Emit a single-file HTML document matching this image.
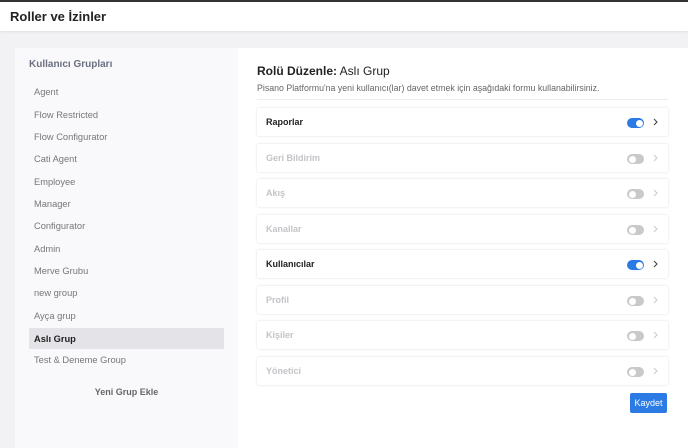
<!DOCTYPE html>
<html><head><meta charset="utf-8"><style>
*{margin:0;padding:0;box-sizing:border-box}
body{width:688px;height:439px;overflow:hidden;background:#f2f2f4;font-family:"Liberation Sans",sans-serif;position:relative}
.top{position:absolute;left:0;top:0;width:688px;height:31px;background:#fff;border-top:2px solid #333;box-shadow:0 1px 3px rgba(0,0,0,.08)}
.top h1{position:absolute;left:10px;top:7px;font-size:13px;font-weight:bold;color:#222}
.left{position:absolute;left:15px;top:48px;width:223px;height:400px;background:#f9f9fb}
.left .t{position:absolute;left:14px;top:11px;font-size:10px;font-weight:bold;color:#6c6f80}
.it{position:absolute;left:14px;width:195px;height:21px;line-height:22px;padding-left:5px;font-size:9.3px;color:#777}
.it.a{background:#e3e3e8;color:#222;font-weight:bold}
.add{position:absolute;left:0;width:223px;text-align:center;top:339px;font-size:9px;font-weight:bold;color:#666}
.right{position:absolute;left:238px;top:48px;width:450px;height:400px;background:#fff}
.h{position:absolute;left:19px;top:16px;font-size:12px;color:#222}
.d{position:absolute;left:19px;top:35px;font-size:8.8px;color:#666}
.sep{position:absolute;left:19px;top:51px;width:411px;height:1px;background:#eee}
.row{position:absolute;left:19px;width:411px;height:28px;background:#fff;box-shadow:0 0 2px rgba(0,0,0,.15);border-radius:2px}
.row span{position:absolute;left:9px;top:9px;font-size:9px;font-weight:bold;color:#222}
.row.off span{color:#c4c4c8}
.tg{position:absolute;left:370px;top:10px;width:17px;height:10px;border-radius:5px;background:#2c7be5}
.tg:after{content:"";position:absolute;right:1.5px;top:1.5px;width:7px;height:7px;border-radius:50%;background:#fff}
.off .tg{background:#c9c9cc}
.off .tg:after{left:1.5px;right:auto}
.ch{position:absolute;left:396px;top:10px}
.btn{position:absolute;left:392px;top:345px;width:37px;height:20px;background:#2c7be5;color:#fff;font-size:9px;line-height:20px;text-align:center;border-radius:2px}
</style></head><body>
<div class="top"><h1>Roller ve İzinler</h1></div>
<div class="left">
<div class="t">Kullanıcı Grupları</div>
<div class="it" style="top:33px">Agent</div>
<div class="it" style="top:56px">Flow Restricted</div>
<div class="it" style="top:78px">Flow Configurator</div>
<div class="it" style="top:100px">Cati Agent</div>
<div class="it" style="top:123px">Employee</div>
<div class="it" style="top:145px">Manager</div>
<div class="it" style="top:167px">Configurator</div>
<div class="it" style="top:190px">Admin</div>
<div class="it" style="top:212px">Merve Grubu</div>
<div class="it" style="top:234px">new group</div>
<div class="it" style="top:257px">Ayça grup</div>
<div class="it a" style="top:280px">Aslı Grup</div>
<div class="it" style="top:301px">Test &amp; Deneme Group</div>
<div class="add">Yeni Grup Ekle</div>
</div>
<div class="right">
<div class="h"><b>Rolü Düzenle:</b> Aslı Grup</div>
<div class="d">Pisano Platformu'na yeni kullanıcı(lar) davet etmek için aşağıdaki formu kullanabilirsiniz.</div>
<div class="sep"></div>
<div class="row" style="top:60px"><span>Raporlar</span><i class="tg"></i><svg class="ch" width="5" height="8"><path d="M1 1l3 3-3 3" fill="none" stroke="#444" stroke-width="1.1"/></svg></div>
<div class="row off" style="top:96px"><span>Geri Bildirim</span><i class="tg"></i><svg class="ch" width="5" height="8"><path d="M1 1l3 3-3 3" fill="none" stroke="#ccc" stroke-width="1.1"/></svg></div>
<div class="row off" style="top:131px"><span>Akış</span><i class="tg"></i><svg class="ch" width="5" height="8"><path d="M1 1l3 3-3 3" fill="none" stroke="#ccc" stroke-width="1.1"/></svg></div>
<div class="row off" style="top:167px"><span>Kanallar</span><i class="tg"></i><svg class="ch" width="5" height="8"><path d="M1 1l3 3-3 3" fill="none" stroke="#ccc" stroke-width="1.1"/></svg></div>
<div class="row" style="top:202px"><span>Kullanıcılar</span><i class="tg"></i><svg class="ch" width="5" height="8"><path d="M1 1l3 3-3 3" fill="none" stroke="#444" stroke-width="1.1"/></svg></div>
<div class="row off" style="top:238px"><span>Profil</span><i class="tg"></i><svg class="ch" width="5" height="8"><path d="M1 1l3 3-3 3" fill="none" stroke="#ccc" stroke-width="1.1"/></svg></div>
<div class="row off" style="top:273px"><span>Kişiler</span><i class="tg"></i><svg class="ch" width="5" height="8"><path d="M1 1l3 3-3 3" fill="none" stroke="#ccc" stroke-width="1.1"/></svg></div>
<div class="row off" style="top:309px"><span>Yönetici</span><i class="tg"></i><svg class="ch" width="5" height="8"><path d="M1 1l3 3-3 3" fill="none" stroke="#ccc" stroke-width="1.1"/></svg></div>
<div class="btn">Kaydet</div>
</div>
</body></html>
